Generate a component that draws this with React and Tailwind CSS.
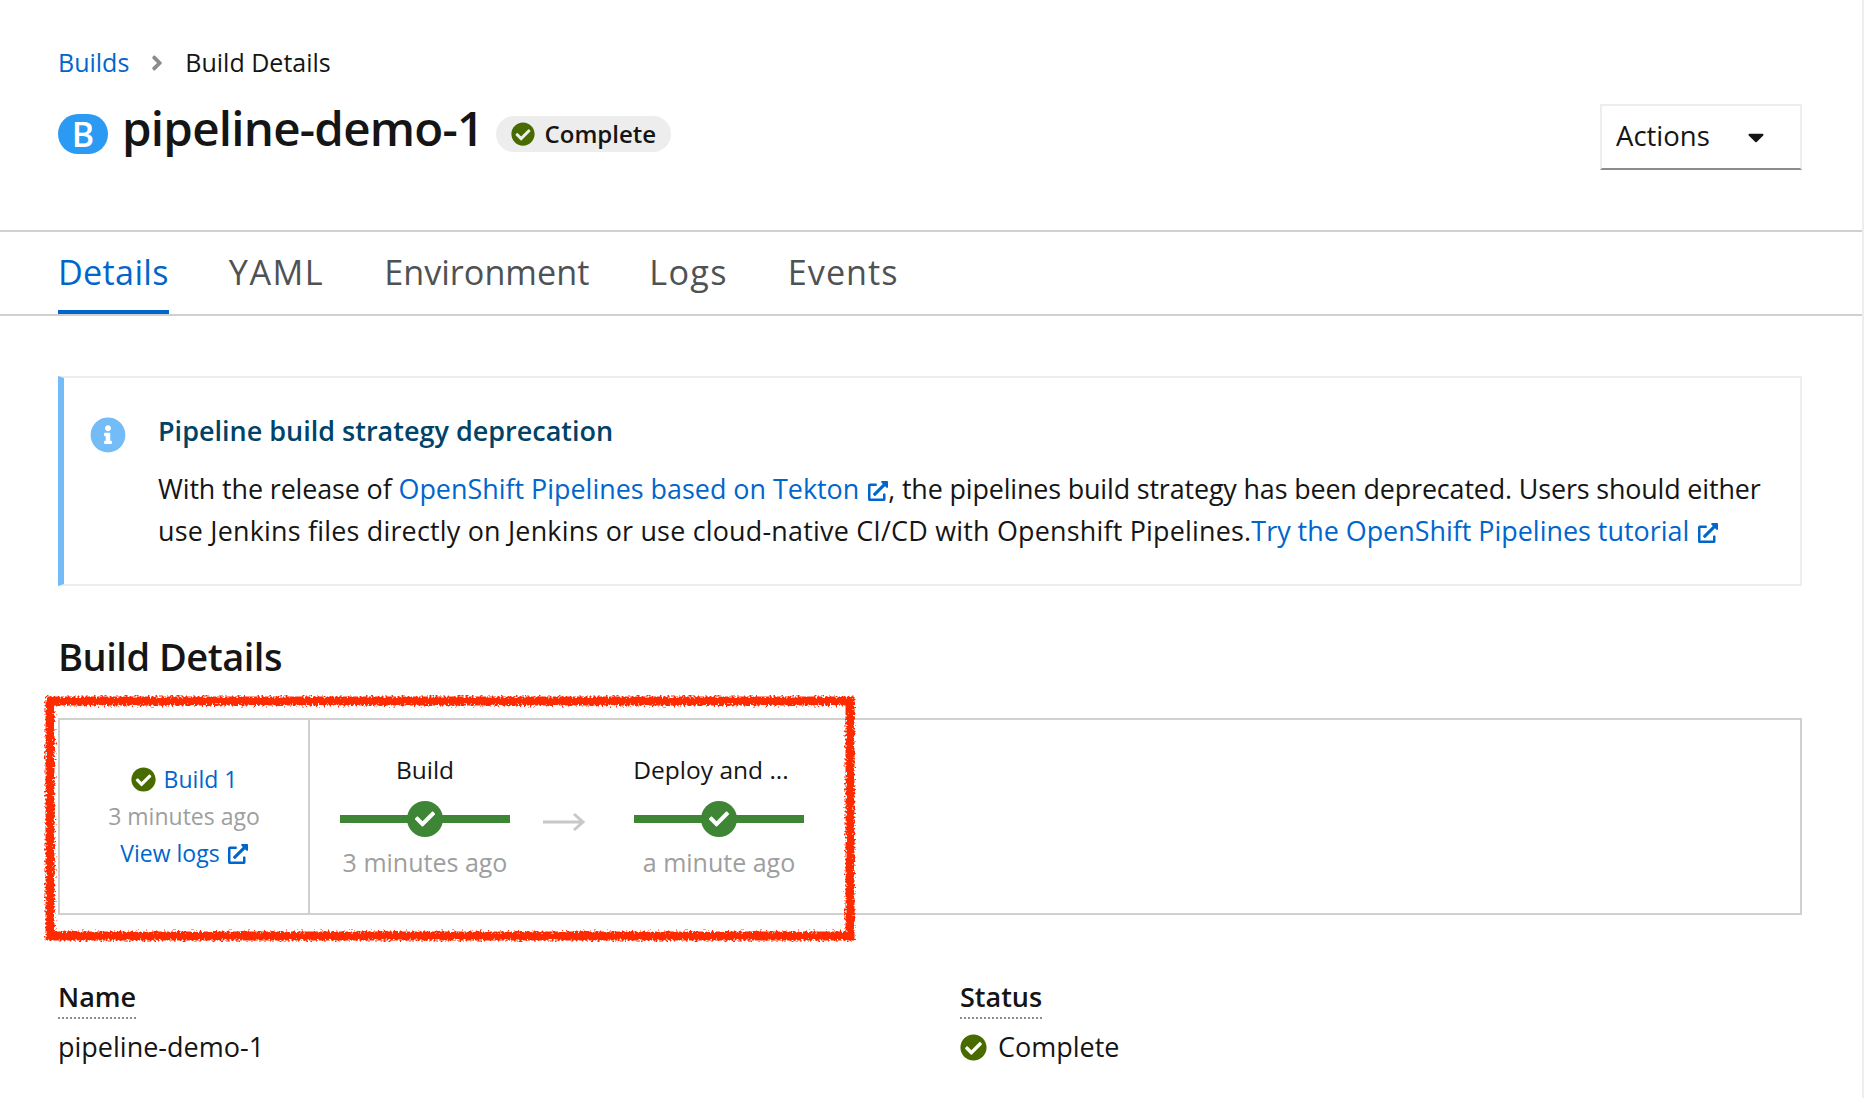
import React from "react";
import { FaCheckCircle, FaExternalLinkAlt, FaInfoCircle, FaAngleRight, FaCaretDown, FaCheck } from "react-icons/fa";

const Ext = ({ className }) => <FaExternalLinkAlt className={"inline-block " + className} />;

function Task({ title, time, titleClass }) {
  return (
    <div className="flex w-[170px] flex-col items-center">
      <div className={"h-[36px] text-[24.5px] leading-[36px] whitespace-nowrap text-[#151515] " + titleClass}>{title}</div>
      <div className="relative mt-[13px] flex h-[36px] w-full items-center justify-center">
        <div className="absolute inset-x-0 top-[14px] h-[8px] bg-[#3e8635]" />
        <div className="relative flex h-[36px] w-[36px] items-center justify-center rounded-full bg-[#3e8635]">
          <FaCheck className="h-[20px] w-[20px] text-white" />
        </div>
      </div>
      <div className="mt-[7px] text-[25px] leading-[36px] whitespace-nowrap text-[#9e9e9e]">{time}</div>
    </div>
  );
}

export default function App() {
  return (
    <div className="relative h-[1098px] w-[1864px] overflow-hidden border-r-2 border-[#ededed] bg-white font-['Open_Sans',sans-serif] text-[#151515]">
      <header className="h-[232px] border-b-2 border-[#d0d0d0] pt-[44px] pr-[60px] pl-[58px]">
        <nav className="flex h-[38px] items-center text-[25px]">
          <span className="text-[#0066cc]">Builds</span>
          <FaAngleRight className="mx-[20px] h-[24px] w-[16px] text-[#8a8d90]" />
          <span>Build Details</span>
        </nav>
        <div className="mt-[8px] flex items-start justify-between">
          <div className="mt-[24px] flex h-[40px] items-center">
            <span className="flex h-[40px] w-[50px] items-center justify-center rounded-[20px] bg-[#2b9af3] text-[34px] leading-none font-semibold text-white">B</span>
            <h1 className="mt-[-12px] ml-[14px] text-[47.5px] leading-[56px] font-semibold tracking-[-0.75px]">pipeline-demo-1</h1>
            <span className="ml-[12px] flex h-[36px] items-center rounded-[18px] bg-[#ededed] pr-[15px] pl-[15px] text-[24px] font-semibold">
              <FaCheckCircle className="mr-[10px] h-[24px] w-[24px] text-[#486b00]" />
              Complete
            </span>
          </div>
          <button className="mt-[14px] flex h-[66px] w-[202px] items-center border-2 border-[#ededed] border-b-[#8a8d90] pb-[2px] pl-[14px] text-[27.5px] text-[#151515]">
            Actions
            <FaCaretDown className="mt-[2px] ml-[35px] h-[26px] w-[22px]" />
          </button>
        </div>
      </header>

      <nav className="flex h-[84px] gap-[60px] border-b-2 border-[#d0d0d0] pl-[58px] text-[34.2px] text-[#4f5255]">
        <span className="box-content h-[78px] border-b-4 border-[#0066cc] leading-[80px] tracking-[0.3px] text-[#0066cc]">Details</span>
        <span className="leading-[80px] tracking-[1.5px]">YAML</span>
        <span className="leading-[80px]">Environment</span>
        <span className="leading-[80px] tracking-[1.3px]">Logs</span>
        <span className="leading-[80px] tracking-[1px]">Events</span>
      </nav>

      <main className="pt-[60px] pr-[60px] pl-[58px]">
        <section className="flex h-[210px] border-2 border-l-[6px] border-[#ededed] border-l-[#73bcf7] pt-[35px] pl-[26px]">
          <FaInfoCircle className="mt-[4px] h-[36px] w-[36px] rounded-full text-[#73bcf7]" />
          <div className="ml-[32px]">
            <h2 className="h-[36px] text-[27px] leading-[36px] font-semibold text-[#004368]">Pipeline build strategy deprecation</h2>
            <p className="mt-[19px] w-[1640px] text-[26.9px] leading-[42px]">
              <span className="tracking-[-0.12px]">With the release of </span>
              <span className="text-[#0066cc]">OpenShift Pipelines based on Tekton <Ext className="ml-[2px] h-[20px] w-[20px] align-[-2px]" /></span>
              <span className="tracking-[-0.15px]">, the pipelines build strategy has been deprecated. Users should either </span>
              <span className="tracking-[0.21px]">use Jenkins files directly on Jenkins or use cloud-native CI/CD with Openshift Pipelines.</span>
              <span className="text-[#0066cc]">Try the OpenShift Pipelines tutorial <Ext className="ml-[2px] h-[20px] w-[20px] align-[-2px]" /></span>
            </p>
          </div>
        </section>

        <h2 className="mt-[46px] h-[48px] text-[38px] leading-[48px] font-semibold tracking-[-0.5px]">Build Details</h2>

        <section className="mt-[38px] flex h-[197px] border-2 border-[#d0d0d0]">
          <div className="flex w-[250px] flex-col items-center justify-center border-r-2 border-[#d0d0d0] text-[23px] leading-[37px]">
            <div className="flex items-center text-[#0066cc]">
              <FaCheckCircle className="mr-[8px] h-[25px] w-[25px] text-[#486b00]" />
              Build 1
            </div>
            <div className="text-[#9e9e9e]">3 minutes ago</div>
            <div className="flex items-center text-[#0066cc]">
              View logs
              <Ext className="ml-[8px] h-[20px] w-[20px]" />
            </div>
          </div>
          <div className="flex items-start pt-[32px] pl-[30px]">
            <Task title="Build" time="3 minutes ago" titleClass="" />
            <svg className="mt-[60px] mr-[48px] ml-[32px] h-[20px] w-[44px]" viewBox="0 0 44 20" fill="none" stroke="#c8c8c8" strokeWidth="3">
              <path d="M1 10h40M32 2l9 8-9 8" />
            </svg>
            <Task title="Deploy and ..." time="a minute ago" titleClass="mr-[16px]" />
          </div>
        </section>

        <div className="mt-[62px] flex text-[27px]">
          <div className="w-[902px]">
            <div className="inline-block h-[38px] border-b-2 border-dotted border-[#8a8d90] leading-[32px] font-semibold">Name</div>
            <div className="mt-[8px] leading-[40px]">pipeline-demo-1</div>
          </div>
          <div>
            <div className="inline-block h-[38px] border-b-2 border-dotted border-[#8a8d90] leading-[32px] font-semibold">Status</div>
            <div className="mt-[8px] flex items-center leading-[40px]">
              <FaCheckCircle className="mr-[11px] h-[27px] w-[27px] text-[#486b00]" />
              Complete
            </div>
          </div>
        </div>
      </main>

      <svg className="pointer-events-none absolute top-[695px] left-[44px] h-[247px] w-[812px]" viewBox="0 0 812 247" fill="none">
        <defs>
          <filter id="rough" x="-5%" y="-5%" width="110%" height="110%">
            <feTurbulence type="fractalNoise" baseFrequency="0.5" numOctaves="2" seed="4" />
            <feDisplacementMap in="SourceGraphic" scale="8" />
          </filter>
        </defs>
        <rect x="6" y="6" width="800" height="235" stroke="#ff2a00" strokeWidth="9" filter="url(#rough)" />
      </svg>
    </div>
  );
}
